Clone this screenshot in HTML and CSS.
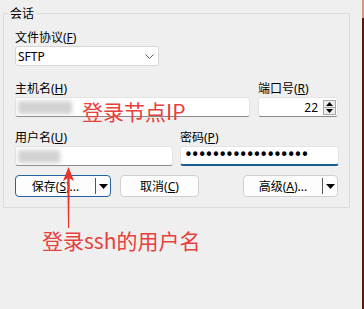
FILE: index.html
```html
<!DOCTYPE html>
<html lang="zh-CN">
<head>
<meta charset="utf-8">
<title>会话</title>
<link rel="stylesheet" href="styles.css">
</head>
<body>
<div class="screen">
  <main class="dialog">
    <fieldset class="group">
      <legend>会话</legend>
      <div class="field row-proto">
        <label class="lbl">文件协议(<u>F</u>)</label>
        <div class="select">
          <span>SFTP</span>
          <svg class="chev" width="9" height="5" viewBox="0 0 9 5"><polyline points="0.5,0.5 4.5,4.5 8.5,0.5" fill="none" stroke="#606060" stroke-width="1"/></svg>
        </div>
      </div>
      <div class="row row-host">
        <div class="field host">
          <label class="lbl">主机名(<u>H</u>)</label>
          <div class="input"><span class="blur blur-host"></span></div>
        </div>
        <div class="field port">
          <label class="lbl">端口号(<u>R</u>)</label>
          <div class="input input-port">
            <span class="num">22</span>
            <span class="spin">
              <span class="spin-btn"><svg width="7" height="4" viewBox="0 0 7 4"><polygon points="3.5,0 7,4 0,4" fill="#000"/></svg></span>
              <span class="spin-btn"><svg width="7" height="4" viewBox="0 0 7 4"><polygon points="0,0 7,0 3.5,4" fill="#000"/></svg></span>
            </span>
          </div>
        </div>
      </div>
      <div class="row row-user">
        <div class="field user">
          <label class="lbl">用户名(<u>U</u>)</label>
          <div class="input"><span class="blur blur-user"></span></div>
        </div>
        <div class="field pass">
          <label class="lbl">密码(<u>P</u>)</label>
          <div class="input input-pass"><span class="dots">••••••••••••••••••</span></div>
        </div>
      </div>
      <div class="row row-btns">
        <div class="btn btn-split btn-save">
          <span class="btn-label">保存(<u>S</u>)...</span>
          <span class="sep"></span>
          <span class="drop"><svg width="9" height="5" viewBox="0 0 9 5"><polygon points="0,0 9,0 4.5,5" fill="#000"/></svg></span>
        </div>
        <div class="btn btn-cancel"><span class="btn-label">取消(<u>C</u>)</span></div>
        <div class="btn btn-split btn-adv">
          <span class="btn-label">高级(<u>A</u>)...</span>
          <span class="sep"></span>
          <span class="drop"><svg width="9" height="5" viewBox="0 0 9 5"><polygon points="0,0 9,0 4.5,5" fill="#000"/></svg></span>
        </div>
      </div>
    </fieldset>

    <div class="note note-ip">登录节点IP</div>
    <svg class="arrow" width="14" height="62" viewBox="0 0 14 62">
      <polygon points="6.5,0 12,14 7.7,11.5 7.1,61 6,61 5.3,11.5 1,14" fill="#e8332d"/>
    </svg>
    <div class="note note-user">登录ssh的用户名</div>
  </main>
  <div class="edge"></div>
</div>
</body>
</html>
```

FILE: styles.css
```css
* { box-sizing: border-box; }

html, body { margin: 0; padding: 0; }

body {
  width: 364px;
  height: 309px;
  overflow: hidden;
  background: #efefef;
  color: #000;
  font: 12px/15px "Noto Sans", "Noto Sans CJK SC", sans-serif;
}

.screen {
  display: flex;
  height: 309px;
}

.dialog {
  position: relative;
  flex: 1;
  padding: 5px 0 0 3px;
}

.edge {
  width: 2px;
  background: linear-gradient(#d49a78 0 18px, #5b1c06 18px);
}

.group {
  margin: 0;
  width: 347px;
  border: 1px solid #dcdcdc;
  padding: 0 10px 10px 11px;
  min-width: 0;
}

.group legend {
  padding: 0 2px;
  margin-left: -7px;
  line-height: 17px;
}

u { text-decoration: underline; text-underline-offset: 1px; }

.field {
  display: flex;
  flex-direction: column;
  gap: 1px;
}

.lbl { display: block; line-height: 15px; }

.row-proto { margin-top: 8px; }

.select {
  width: 144px;
  height: 20px;
  background: #fff;
  border: 1px solid #d6d6d6;
  border-radius: 3px;
  display: flex;
  align-items: center;
  justify-content: space-between;
  padding: 0 4px 0 2px;
}

.row {
  display: flex;
}

.row-host { margin-top: 15px; gap: 8px; }
.row-user { margin-top: 13px; gap: 7px; }
.row-btns { margin-top: 9px; align-items: center; }

.host { width: 235px; }
.port { width: 80px; }
.user { width: 158px; }
.pass { width: 159px; }

.input {
  height: 20px;
  background: #fff;
  border: 1px solid #e4e4e4;
  border-bottom-color: #8a8a8a;
  border-radius: 3px;
  display: flex;
  align-items: center;
}

.blur {
  display: block;
  height: 13px;
  margin-left: 2px;
  background: #d2d2d2;
  filter: blur(2px);
}
.blur-host { width: 54px; }
.blur-user { width: 42px; }

.input-port {
  justify-content: flex-end;
  padding-right: 1px;
}

.num { margin-right: 5px; }

.spin {
  display: flex;
  flex-direction: column;
  width: 13px;
  height: 15px;
}

.spin-btn {
  flex: 1;
  display: flex;
  align-items: center;
  justify-content: center;
  background: #ececec;
  border: 1px solid #a8a8a8;
}
.spin-btn + .spin-btn { border-top: 0; }

.input-pass {
  border-bottom: 2px solid #1b5f91;
  padding-left: 3px;
}

.dots {
  font-family: "DejaVu Sans", sans-serif;
  font-size: 15px;
  line-height: 15px;
  letter-spacing: -2px;
}

.btn {
  height: 22px;
  background: #fdfdfd;
  border: 1px solid #d0d0d0;
  border-radius: 4px;
  display: flex;
  align-items: center;
  justify-content: center;
}

.btn-split { justify-content: flex-start; }
.btn-split .btn-label { flex: 1; text-align: center; }

.sep {
  width: 1px;
  height: 16px;
  background: #555;
}

.drop {
  width: 14px;
  display: flex;
  justify-content: center;
  align-items: center;
}

.btn-save {
  width: 96px;
  border-color: #2462a0;
}

.btn-cancel {
  width: 79px;
  margin-left: 9px;
}

.btn-adv {
  width: 95px;
  margin-left: auto;
  margin-right: 1px;
}

.note {
  position: absolute;
  color: #e8403c;
  font-family: "Noto Sans CJK SC", sans-serif;
  font-size: 21px;
  line-height: 21px;
  white-space: nowrap;
}

.note-ip { left: 82px; top: 101px; }
.note-user { left: 42px; top: 230px; }

.arrow {
  position: absolute;
  left: 62px;
  top: 167px;
}
```
